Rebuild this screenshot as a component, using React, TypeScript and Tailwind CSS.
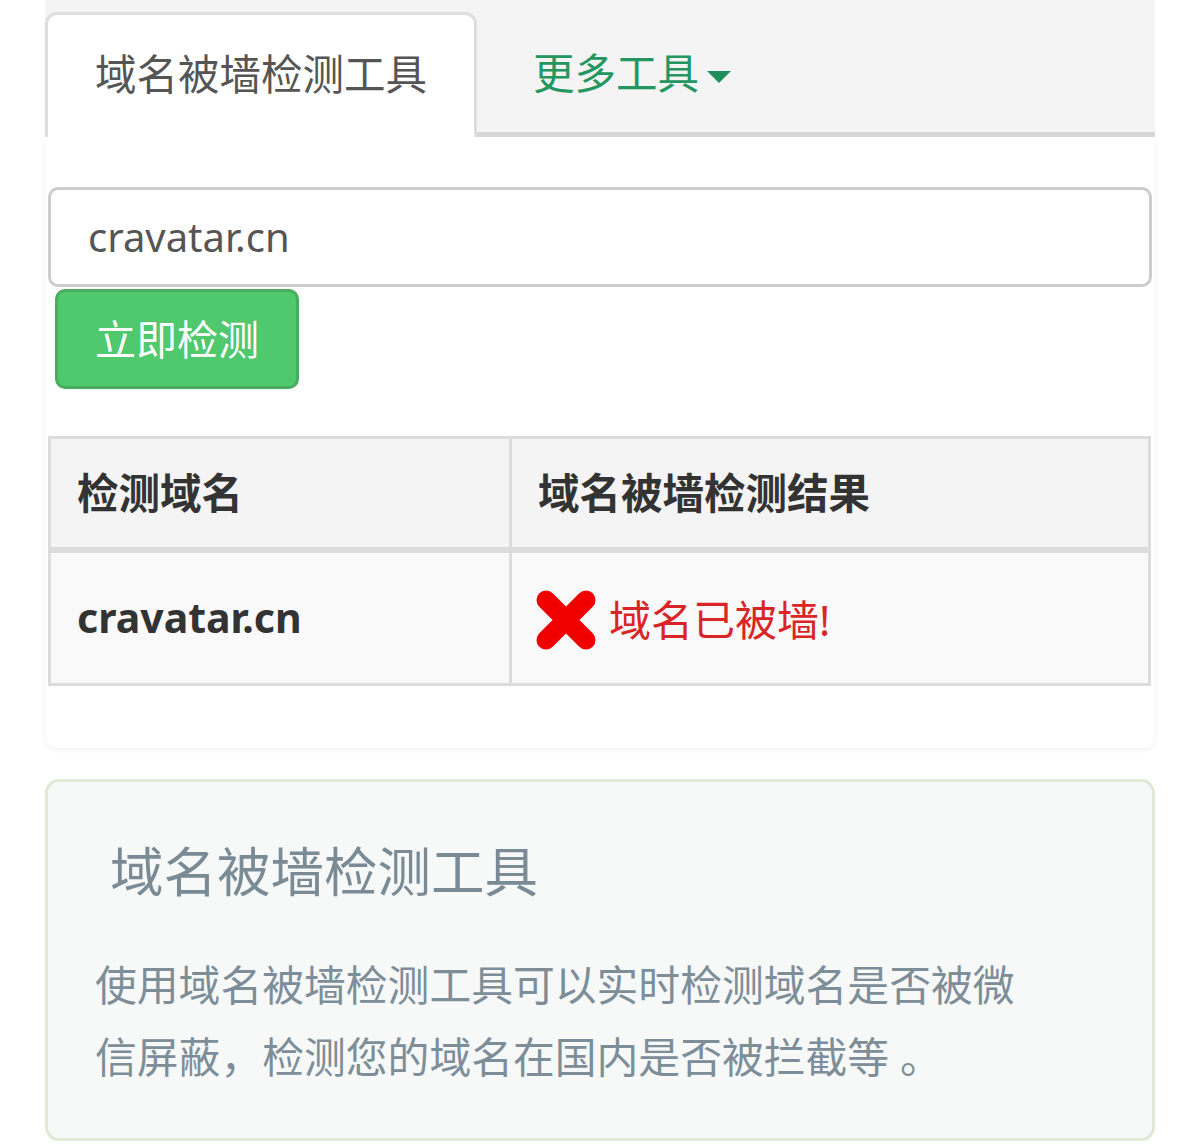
import React from 'react'

const FONT = "font-['Noto_Sans','Noto_Sans_CJK_SC',sans-serif]"

function CrossIcon() {
  return (
    <svg className="size-[62px] shrink-0" viewBox="0 0 62 62" aria-hidden>
      <path d="M11 11 L51 51 M51 11 L11 51" stroke="#f00000" strokeWidth="19" strokeLinecap="round" />
    </svg>
  )
}

export default function App() {
  return (
    <div className={`bg-white w-[1200px] min-h-[1148px] ${FONT}`}>
      <div className="ml-[45px] w-[1110px]">
        {/* Tabs */}
        <div className="flex h-[137px] bg-[#f4f4f4]">
          <div className="mt-[12px] w-[432px] bg-white border-[3px] border-b-0 border-[#dedede] rounded-t-[12px] flex items-center pl-[47px] pb-[2px]">
            <span className="text-[41.5px] text-[#555] leading-none">域名被墙检测工具</span>
          </div>
          <div className="flex-1 border-b-[5px] border-[#d6d6d6] flex items-center pl-[56px] pt-[16px]">
            <span className="text-[41.5px] text-[#24965f] leading-none">更多工具</span>
            <span className="ml-[8px] mt-[6px] w-0 h-0 border-l-[12px] border-r-[12px] border-t-[12px] border-l-transparent border-r-transparent border-t-[#1e8f5a]" />
          </div>
        </div>

        {/* Checker card */}
        <div className="bg-white rounded-b-[12px] shadow-[0_2px_5px_rgba(0,0,0,0.06)] pt-[50px] pb-[62px] px-[3px]">
          <div className="h-[100px] border-[3px] border-[#cccccc] rounded-[10px] flex items-center pl-[37px] pr-[4px]">
            <span className="text-[40px] text-[#555] leading-none">cravatar.cn</span>
          </div>
          <button className="mt-[2px] ml-[7px] w-[244px] h-[100px] bg-[#50c86e] border-[3px] border-[#48ad5f] rounded-[10px] flex items-center justify-center">
            <span className="text-[41px] text-white leading-none">立即检测</span>
          </button>

          <table className="mt-[47px] w-[1103px] border-collapse">
            <thead>
              <tr className="bg-[#f4f4f4]">
                <th className="w-[461px] h-[112px] border-[3px] border-b-[6px] border-[#dcdcdc] text-left pl-[26px] text-[41.5px] font-bold text-[#333]">检测域名</th>
                <th className="h-[112px] border-[3px] border-b-[6px] border-[#dcdcdc] text-left pl-[26px] text-[41.5px] font-bold text-[#333]">域名被墙检测结果</th>
              </tr>
            </thead>
            <tbody>
              <tr className="bg-[#f9f9f9]">
                <td className="h-[135px] border-[3px] border-[#dcdcdc] pl-[26px] text-[41px] font-bold text-[#333]">cravatar.cn</td>
                <td className="h-[135px] border-[3px] border-[#dcdcdc] pl-[23px]">
                  <div className="flex items-center gap-[12px] pt-[4px]">
                    <CrossIcon />
                    <span className="text-[42px] text-[#d92525] leading-none">域名已被墙!</span>
                  </div>
                </td>
              </tr>
            </tbody>
          </table>
        </div>

        {/* Info card */}
        <div className="mt-[31px] bg-[#f7f9f9] border-[3px] border-[#dfe9d5] rounded-[14px] pt-[61px] pb-[45px]">
          <h2 className="pl-[62px] text-[53.5px] leading-[1.1] text-[#7a8b96] font-normal">域名被墙检测工具</h2>
          <p className="mt-[47px] pl-[47px] pr-[100px] text-[41.8px] leading-[72px] text-[#7d8e99]">
            使用域名被墙检测工具可以实时检测域名是否被微信屏蔽，检测您的域名在国内是否被拦截等 。
          </p>
        </div>
      </div>
    </div>
  )
}
